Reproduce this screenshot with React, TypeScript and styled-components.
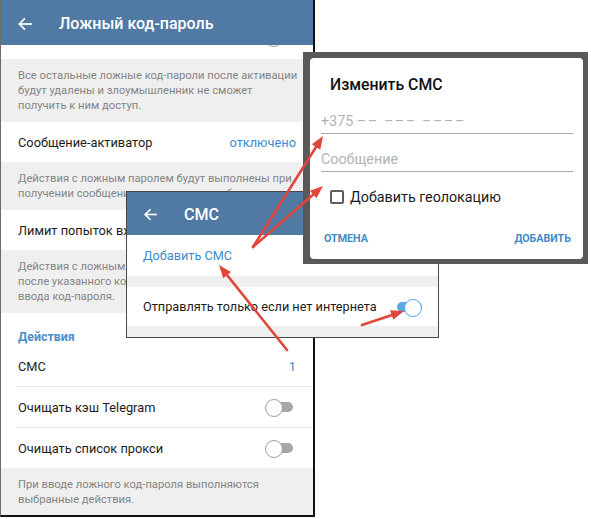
import React from "react";
import styled, { createGlobalStyle } from "styled-components";

const GlobalStyle = createGlobalStyle`
  html, body { margin: 0; padding: 0; background: #fff; }
  body { font-family: Roboto, "Noto Sans", "Liberation Sans", sans-serif; }
  * { box-sizing: border-box; }
`;

const Stage = styled.div`
  position: relative;
  width: 591px;
  height: 519px;
  overflow: hidden;
  background: #fff;
`;

const Phone = styled.div`
  width: 315px;
  height: 517px;
  border-left: 1px solid #6b6b6b;
  border-right: 2px solid #111;
  border-bottom: 2px solid #111;
  display: flex;
  flex-direction: column;
  background: #fff;
  overflow: hidden;
`;

const AppBar = styled.div<{ $h: number }>`
  height: ${(p) => p.$h}px;
  flex: none;
  background: #5079a4;
  display: flex;
  align-items: center;
  padding: 2px 0 0 16px;
  color: #fff;
`;

const BarTitle = styled.div`
  margin-left: 26px;
  font-size: 16px;
  font-weight: 500;
  white-space: nowrap;
`;

const Clip = styled.div`
  height: 14px;
  flex: none;
  overflow: hidden;
  background: #fff;
`;

const ClipInner = styled.div`
  margin-top: -28px;
`;

const Row = styled.div<{ $h?: number; $pl?: number; $pr?: number; $fs?: number }>`
  height: ${(p) => p.$h ?? 40}px;
  flex: none;
  display: flex;
  align-items: center;
  justify-content: space-between;
  padding: 0 ${(p) => p.$pr ?? 17}px 0 ${(p) => p.$pl ?? 17}px;
  background: #fff;
  font-size: ${(p) => p.$fs ?? 12.8}px;
  color: #1c1c1c;
  white-space: nowrap;
`;

const Value = styled.span`
  color: #3d8bcc;
`;

const Info = styled.div<{ $grow?: boolean }>`
  flex: ${(p) => (p.$grow ? "1" : "none")};
  background: #efefef;
  padding: 9px 17px 9px 17px;
  font-size: 11.2px;
  line-height: 15px;
  color: #858585;
  white-space: nowrap;
`;

const SectionHead = styled.div`
  height: 33px;
  flex: none;
  display: flex;
  align-items: center;
  padding: 13px 17px 0;
  font-size: 12.4px;
  font-weight: 700;
  color: #4a8fc9;
`;

const Divider = styled.div`
  height: 1px;
  flex: none;
  margin-left: 15px;
  background: #e6e6e6;
`;

const Switch = styled.span<{ $on?: boolean }>`
  position: relative;
  display: inline-block;
  flex: none;
  width: 28px;
  height: 16px;
  &::before {
    content: "";
    position: absolute;
    left: 3px;
    right: 0;
    top: 3px;
    height: 10px;
    border-radius: 5px;
    background: ${(p) => (p.$on ? "#55a7e6" : "#a7a7a7")};
  }
  &::after {
    content: "";
    position: absolute;
    top: 0;
    ${(p) => (p.$on ? "right: 0;" : "left: 0;")}
    width: 16px;
    height: 16px;
    border-radius: 50%;
    background: #fff;
    border: 1.5px solid ${(p) => (p.$on ? "#55a7e6" : "#9d9d9d")};
  }
`;

const SmsWindow = styled.div`
  position: absolute;
  left: 126px;
  top: 191px;
  width: 313px;
  height: 147px;
  border: 1px solid #474747;
  background: #fff;
  display: flex;
  flex-direction: column;
`;

const LinkText = styled.span`
  color: #3d8bcc;
`;

const Band = styled.div<{ $grow?: boolean }>`
  flex: ${(p) => (p.$grow ? "1" : "none")};
  height: 11px;
  background: #efefef;
`;

const Frame = styled.div`
  position: absolute;
  left: 303px;
  top: 52px;
  width: 285px;
  height: 212px;
  background: #595959;
  padding: 6px 5px 5px 7px;
`;

const Card = styled.div`
  height: 100%;
  background: #fff;
  border-radius: 4px;
  padding: 15px 10px 0 11px;
  display: flex;
  flex-direction: column;
`;

const DialogTitle = styled.div`
  margin-left: 9px;
  font-size: 15.8px;
  line-height: 24px;
  font-weight: 500;
  color: #111;
`;

const Field = styled.div<{ $mt: number }>`
  margin-top: ${(p) => p.$mt}px;
  padding-bottom: 2px;
  border-bottom: 1px solid #a9a9a9;
  font-size: 14.3px;
  line-height: 20px;
  color: #b3b3b3;
  white-space: nowrap;
`;

const Dashes = styled.span`
  letter-spacing: 1.6px;
`;

const CheckRow = styled.label`
  margin-top: 15px;
  margin-left: 9px;
  display: flex;
  align-items: center;
  gap: 6px;
  font-size: 14.3px;
  line-height: 20px;
  color: #1c1c1c;
`;

const Box = styled.span`
  width: 14px;
  height: 14px;
  border: 2px solid #5e5e5e;
  border-radius: 2px;
`;

const Actions = styled.div`
  margin-top: 24px;
  display: flex;
  justify-content: space-between;
  padding: 0 2px 0 3px;
`;

const TextButton = styled.span`
  font-size: 10.7px;
  line-height: 16px;
  font-weight: 700;
  color: #3f8ac7;
`;

const Overlay = styled.svg`
  position: absolute;
  left: 0;
  top: 0;
  pointer-events: none;
`;

const Back = ({ w }: { w: number }) => (
  <svg width={w} height={w} viewBox="0 0 24 24" fill="none" stroke="#fff" strokeWidth="2.6" strokeLinecap="square">
    <path d="M21 12H4" />
    <path d="M11 4.5 3.5 12l7.5 7.5" />
  </svg>
);

type A = { x1: number; y1: number; x2: number; y2: number };
const RedArrow = ({ x1, y1, x2, y2 }: A) => {
  const dx = x2 - x1;
  const dy = y2 - y1;
  const len = Math.hypot(dx, dy);
  const ux = dx / len;
  const uy = dy / len;
  const hl = 13;
  const hw = 5;
  const bx = x2 - ux * hl;
  const by = y2 - uy * hl;
  const px = -uy;
  const py = ux;
  return (
    <g>
      <line x1={x1} y1={y1} x2={bx + ux * 2} y2={by + uy * 2} stroke="#e2453b" strokeWidth="2.6" strokeLinecap="round" />
      <polygon
        points={`${x2},${y2} ${bx + px * hw},${by + py * hw} ${bx - px * hw},${by - py * hw}`}
        fill="#e2453b"
      />
    </g>
  );
};

export default function App() {
  return (
    <Stage>
      <GlobalStyle />
      <Phone>
        <AppBar $h={45}>
          <Back w={16} />
          <BarTitle>Ложный код-пароль</BarTitle>
        </AppBar>
        <Clip>
          <ClipInner>
            <Row $pr={20}>
              <span>Удалить другие код-пароли</span>
              <Switch />
            </Row>
          </ClipInner>
        </Clip>
        <Info>
          Все остальные ложные код-пароли после активации
          <br />
          будут удалены и злоумышленник не сможет
          <br />
          получить к ним доступ.
        </Info>
        <Row>
          <span>Сообщение-активатор</span>
          <Value>отключено</Value>
        </Row>
        <Info>
          Действия с ложным паролем будут выполнены при
          <br />
          получении сообщения активатора в любом чате
        </Info>
        <Row>
          <span>Лимит попыток входа</span>
          <Value>отключено</Value>
        </Row>
        <Info>
          Действия с ложным паролем будут выполнены
          <br />
          после указанного количества неверных попыток
          <br />
          ввода код-пароля.
        </Info>
        <SectionHead>Действия</SectionHead>
        <Row>
          <span>СМС</span>
          <Value>1</Value>
        </Row>
        <Divider />
        <Row $pr={20}>
          <span>Очищать кэш Telegram</span>
          <Switch />
        </Row>
        <Divider />
        <Row $pr={20}>
          <span>Очищать список прокси</span>
          <Switch />
        </Row>
        <Info $grow>
          При вводе ложного код-пароля выполняются
          <br />
          выбранные действия.
        </Info>
      </Phone>

      <SmsWindow>
        <AppBar $h={43}>
          <Back w={15} />
          <BarTitle>СМС</BarTitle>
        </AppBar>
        <Row $h={41} $pl={16} $fs={12.7}>
          <LinkText>Добавить СМС</LinkText>
        </Row>
        <Band />
        <Row $h={39} $pl={16} $pr={16} $fs={12.7}>
          <span>Отправлять только если нет интернета</span>
          <Switch $on />
        </Row>
        <Band $grow />
      </SmsWindow>

      <Frame>
        <Card>
          <DialogTitle>Изменить СМС</DialogTitle>
          <Field $mt={14}>
            +375 <Dashes>–– ––– ––––</Dashes>
          </Field>
          <Field $mt={15}>Сообщение</Field>
          <CheckRow>
            <Box />
            Добавить геолокацию
          </CheckRow>
          <Actions>
            <TextButton>ОТМЕНА</TextButton>
            <TextButton>ДОБАВИТЬ</TextButton>
          </Actions>
        </Card>
      </Frame>

      <Overlay width={591} height={519} viewBox="0 0 591 519">
        <RedArrow x1={253} y1={247} x2={323} y2={136} />
        <RedArrow x1={253} y1={247} x2={323} y2={186} />
        <RedArrow x1={287} y1={350} x2={219} y2={265} />
        <RedArrow x1={362} y1={325} x2={404} y2={311} />
      </Overlay>
    </Stage>
  );
}
